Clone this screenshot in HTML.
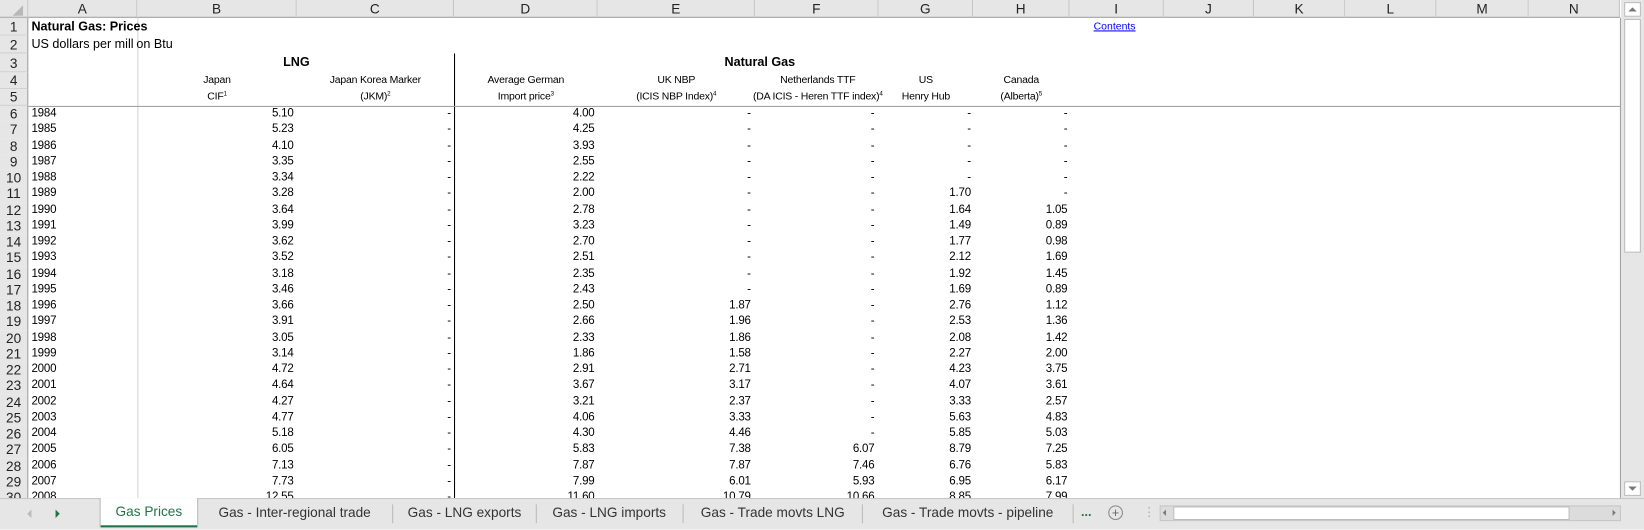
<!DOCTYPE html>
<html><head><meta charset="utf-8"><style>
*{margin:0;padding:0;box-sizing:border-box}
html,body{width:1644px;height:527px;overflow:hidden;background:#fff}
#w{position:absolute;left:0;top:0;width:1568px;height:503px;transform:scale(1.0485);transform-origin:0 0;font-family:"Liberation Sans",Arial,sans-serif;color:#000}
.abs{position:absolute}
.ch{position:absolute;top:0;height:17px;background:#e6e6e6;border-right:1px solid #c6c6c6;border-bottom:1px solid #a0a0a0;font-size:13px;text-align:center;line-height:17px;color:#222}
.rh{position:absolute;left:0;width:27px;background:#e6e6e6;border-right:1px solid #a0a0a0;border-bottom:1px solid #d0d0d0;font-size:13px;text-align:center;color:#222}
.r{position:absolute;left:0;width:1545px;height:15.25px;font-size:11px;line-height:15px;letter-spacing:-0.2px}
.r span{position:absolute;top:0;text-align:right}
.r span:nth-child(1){left:0;width:27px;height:15.25px;background:#e6e6e6;border-right:1px solid #a0a0a0;text-align:center;font-size:13px;letter-spacing:0;color:#222}
.r span:nth-child(2){left:30px;text-align:left}
.r span:nth-child(3){right:calc(1545px - 280px)}
.r span:nth-child(4){right:calc(1545px - 430px)}
.r span:nth-child(5){right:calc(1545px - 567px)}
.r span:nth-child(6){right:calc(1545px - 716px)}
.r span:nth-child(7){right:calc(1545px - 834px)}
.r span:nth-child(8){right:calc(1545px - 926px)}
.r span:nth-child(9){right:calc(1545px - 1018px)}
.h{position:absolute;font-size:10px;text-align:center;letter-spacing:-0.2px;line-height:16px;white-space:nowrap}
sup{font-size:6px;vertical-align:4px;line-height:0}
.tab{position:absolute;top:477px;height:26px;font-size:13px;line-height:24px;color:#333;text-align:center}
.sep{position:absolute;top:481px;width:1px;height:18px;background:#bbb}
</style></head><body><div id="w">
<div class="ch" style="left:0;width:27px"></div>
<div class="abs" style="left:12px;top:5px;width:0;height:0;border-left:10px solid transparent;border-bottom:10px solid #b8b8b8"></div>
<div class="ch" style="left:27px;width:104px">A</div>
<div class="ch" style="left:131px;width:152px">B</div>
<div class="ch" style="left:283px;width:150px">C</div>
<div class="ch" style="left:433px;width:137px">D</div>
<div class="ch" style="left:570px;width:150px">E</div>
<div class="ch" style="left:720px;width:118px">F</div>
<div class="ch" style="left:838px;width:90px">G</div>
<div class="ch" style="left:928px;width:92px">H</div>
<div class="ch" style="left:1020px;width:90px">I</div>
<div class="ch" style="left:1110px;width:86px">J</div>
<div class="ch" style="left:1196px;width:87px">K</div>
<div class="ch" style="left:1283px;width:87px">L</div>
<div class="ch" style="left:1370px;width:88px">M</div>
<div class="ch" style="left:1458px;width:87px">N</div>
<div class="rh" style="top:17px;height:17px;line-height:17px">1</div>
<div class="rh" style="top:34px;height:17px;line-height:17px">2</div>
<div class="rh" style="top:51px;height:18px;line-height:20px">3</div>
<div class="rh" style="top:69px;height:16px;line-height:16px">4</div>
<div class="rh" style="top:85px;height:16px;line-height:16px">5</div>
<div class="abs" style="left:131px;top:17px;width:1px;height:458px;background:#d4d4d4"></div>
<div class="abs" style="left:433px;top:51px;width:1px;height:424px;background:#000"></div>
<div class="abs" style="left:27px;top:101px;width:1518px;height:1px;background:#a0a0a0"></div>
<div class="abs" style="left:1545px;top:17px;width:1px;height:458px;background:#a0a0a0"></div>
<div class="abs" style="left:30px;top:18px;font-size:12px;font-weight:bold">Natural Gas: Prices</div>
<div class="abs" style="left:30px;top:35px;font-size:12px">US dollars per mill<span style="color:#fff0">i</span>on Btu</div>
<div class="abs" style="left:1043px;top:20px;font-size:10px;color:#00f;text-decoration:underline">Contents</div>
<div class="abs" style="left:270px;top:52px;font-size:12px;font-weight:bold">LNG</div>
<div class="abs" style="left:691px;top:52px;font-size:12px;font-weight:bold">Natural Gas</div>
<div class="h" style="left:131px;width:152px;top:69px">Japan<br>CIF<sup>1</sup></div>
<div class="h" style="left:283px;width:150px;top:69px">Japan Korea Marker<br>(JKM)<sup>2</sup></div>
<div class="h" style="left:433px;width:137px;top:69px">Average German<br>Import price<sup>3</sup></div>
<div class="h" style="left:570px;width:150px;top:69px">UK NBP<br>(ICIS NBP Index)<sup>4</sup></div>
<div class="h" style="left:690px;width:180px;top:69px">Netherlands TTF<br>(DA ICIS - Heren TTF index)<sup>4</sup></div>
<div class="h" style="left:838px;width:90px;top:69px">US<br>Henry Hub</div>
<div class="h" style="left:928px;width:92px;top:69px">Canada<br>(Alberta)<sup>5</sup></div>
<div class="r" style="top:101px"><span>6</span><span>1984</span><span>5.10</span><span>-</span><span>4.00</span><span>-</span><span>-</span><span>-</span><span>-</span></div>
<div class="r" style="top:116.25px"><span>7</span><span>1985</span><span>5.23</span><span>-</span><span>4.25</span><span>-</span><span>-</span><span>-</span><span>-</span></div>
<div class="r" style="top:131.5px"><span>8</span><span>1986</span><span>4.10</span><span>-</span><span>3.93</span><span>-</span><span>-</span><span>-</span><span>-</span></div>
<div class="r" style="top:146.75px"><span>9</span><span>1987</span><span>3.35</span><span>-</span><span>2.55</span><span>-</span><span>-</span><span>-</span><span>-</span></div>
<div class="r" style="top:162px"><span>10</span><span>1988</span><span>3.34</span><span>-</span><span>2.22</span><span>-</span><span>-</span><span>-</span><span>-</span></div>
<div class="r" style="top:177.25px"><span>11</span><span>1989</span><span>3.28</span><span>-</span><span>2.00</span><span>-</span><span>-</span><span>1.70</span><span>-</span></div>
<div class="r" style="top:192.5px"><span>12</span><span>1990</span><span>3.64</span><span>-</span><span>2.78</span><span>-</span><span>-</span><span>1.64</span><span>1.05</span></div>
<div class="r" style="top:207.75px"><span>13</span><span>1991</span><span>3.99</span><span>-</span><span>3.23</span><span>-</span><span>-</span><span>1.49</span><span>0.89</span></div>
<div class="r" style="top:223px"><span>14</span><span>1992</span><span>3.62</span><span>-</span><span>2.70</span><span>-</span><span>-</span><span>1.77</span><span>0.98</span></div>
<div class="r" style="top:238.25px"><span>15</span><span>1993</span><span>3.52</span><span>-</span><span>2.51</span><span>-</span><span>-</span><span>2.12</span><span>1.69</span></div>
<div class="r" style="top:253.5px"><span>16</span><span>1994</span><span>3.18</span><span>-</span><span>2.35</span><span>-</span><span>-</span><span>1.92</span><span>1.45</span></div>
<div class="r" style="top:268.75px"><span>17</span><span>1995</span><span>3.46</span><span>-</span><span>2.43</span><span>-</span><span>-</span><span>1.69</span><span>0.89</span></div>
<div class="r" style="top:284px"><span>18</span><span>1996</span><span>3.66</span><span>-</span><span>2.50</span><span>1.87</span><span>-</span><span>2.76</span><span>1.12</span></div>
<div class="r" style="top:299.25px"><span>19</span><span>1997</span><span>3.91</span><span>-</span><span>2.66</span><span>1.96</span><span>-</span><span>2.53</span><span>1.36</span></div>
<div class="r" style="top:314.5px"><span>20</span><span>1998</span><span>3.05</span><span>-</span><span>2.33</span><span>1.86</span><span>-</span><span>2.08</span><span>1.42</span></div>
<div class="r" style="top:329.75px"><span>21</span><span>1999</span><span>3.14</span><span>-</span><span>1.86</span><span>1.58</span><span>-</span><span>2.27</span><span>2.00</span></div>
<div class="r" style="top:345px"><span>22</span><span>2000</span><span>4.72</span><span>-</span><span>2.91</span><span>2.71</span><span>-</span><span>4.23</span><span>3.75</span></div>
<div class="r" style="top:360.25px"><span>23</span><span>2001</span><span>4.64</span><span>-</span><span>3.67</span><span>3.17</span><span>-</span><span>4.07</span><span>3.61</span></div>
<div class="r" style="top:375.5px"><span>24</span><span>2002</span><span>4.27</span><span>-</span><span>3.21</span><span>2.37</span><span>-</span><span>3.33</span><span>2.57</span></div>
<div class="r" style="top:390.75px"><span>25</span><span>2003</span><span>4.77</span><span>-</span><span>4.06</span><span>3.33</span><span>-</span><span>5.63</span><span>4.83</span></div>
<div class="r" style="top:406px"><span>26</span><span>2004</span><span>5.18</span><span>-</span><span>4.30</span><span>4.46</span><span>-</span><span>5.85</span><span>5.03</span></div>
<div class="r" style="top:421.25px"><span>27</span><span>2005</span><span>6.05</span><span>-</span><span>5.83</span><span>7.38</span><span>6.07</span><span>8.79</span><span>7.25</span></div>
<div class="r" style="top:436.5px"><span>28</span><span>2006</span><span>7.13</span><span>-</span><span>7.87</span><span>7.87</span><span>7.46</span><span>6.76</span><span>5.83</span></div>
<div class="r" style="top:451.75px"><span>29</span><span>2007</span><span>7.73</span><span>-</span><span>7.99</span><span>6.01</span><span>5.93</span><span>6.95</span><span>6.17</span></div>
<div class="r" style="top:467px"><span>30</span><span>2008</span><span>12.55</span><span>-</span><span>11.60</span><span>10.79</span><span>10.66</span><span>8.85</span><span>7.99</span></div>
<div class="abs" style="left:1546px;top:0;width:22px;height:476px;background:#e6e6e6"></div>
<div class="abs" style="left:1549px;top:2px;width:16px;height:14px;background:#fff;border:1px solid #bbb"></div>
<div class="abs" style="left:1553px;top:7px;width:0;height:0;border-left:4px solid transparent;border-right:4px solid transparent;border-bottom:4px solid #777"></div>
<div class="abs" style="left:1549px;top:18px;width:16px;height:223px;background:#fff;border:1px solid #bbb"></div>
<div class="abs" style="left:1549px;top:459px;width:16px;height:14px;background:#fff;border:1px solid #bbb"></div>
<div class="abs" style="left:1553px;top:464px;width:0;height:0;border-left:4px solid transparent;border-right:4px solid transparent;border-top:4px solid #777"></div>
<div class="abs" style="left:0;top:475px;width:1568px;height:30px;background:#e6e6e6;border-top:1px solid #c6c6c6"></div>
<div class="abs" style="left:26px;top:486px;width:0;height:0;border-top:4px solid transparent;border-bottom:4px solid transparent;border-right:4px solid #bbb"></div>
<div class="abs" style="left:53px;top:486px;width:0;height:0;border-top:4px solid transparent;border-bottom:4px solid transparent;border-left:4px solid #217346"></div>
<div class="tab" style="left:96px;width:92px;top:475px;height:28px;background:#fff;color:#217346;border-bottom:2px solid #217346;line-height:26px;box-shadow:1px 0 0 #bbb,-1px 0 0 #bbb">Gas Prices</div>
<div class="tab" style="left:190px;width:182px">Gas - Inter-regional trade</div>
<div class="sep" style="left:374px"></div>
<div class="tab" style="left:376px;width:134px">Gas - LNG exports</div>
<div class="sep" style="left:511px"></div>
<div class="tab" style="left:512px;width:138px">Gas - LNG imports</div>
<div class="sep" style="left:651px"></div>
<div class="tab" style="left:652px;width:170px">Gas - Trade movts LNG</div>
<div class="sep" style="left:822px"></div>
<div class="tab" style="left:823px;width:200px">Gas - Trade movts - pipeline</div>
<div class="sep" style="left:1023px"></div>
<div class="abs" style="left:1031px;top:481px;font-size:12px;color:#217346;font-weight:bold">...</div>
<div class="abs" style="left:1057px;top:482px;width:14px;height:14px;border:1px solid #888;border-radius:50%;font-size:12px;line-height:12px;text-align:center;color:#666">+</div>
<div class="abs" style="left:1090px;top:481px;font-size:12px;color:#aaa">⋮</div>
<div class="abs" style="left:1106px;top:482px;width:440px;height:15px;background:#dcdcdc;border:1px solid #c6c6c6"></div>
<div class="abs" style="left:1119px;top:483px;width:378px;height:13px;background:#fff;border:1px solid #bbb"></div>
<div class="abs" style="left:1109px;top:486px;width:0;height:0;border-top:3px solid transparent;border-bottom:3px solid transparent;border-right:3px solid #777"></div>
<div class="abs" style="left:1538px;top:486px;width:0;height:0;border-top:3px solid transparent;border-bottom:3px solid transparent;border-left:3px solid #777"></div>
</div></body></html>
